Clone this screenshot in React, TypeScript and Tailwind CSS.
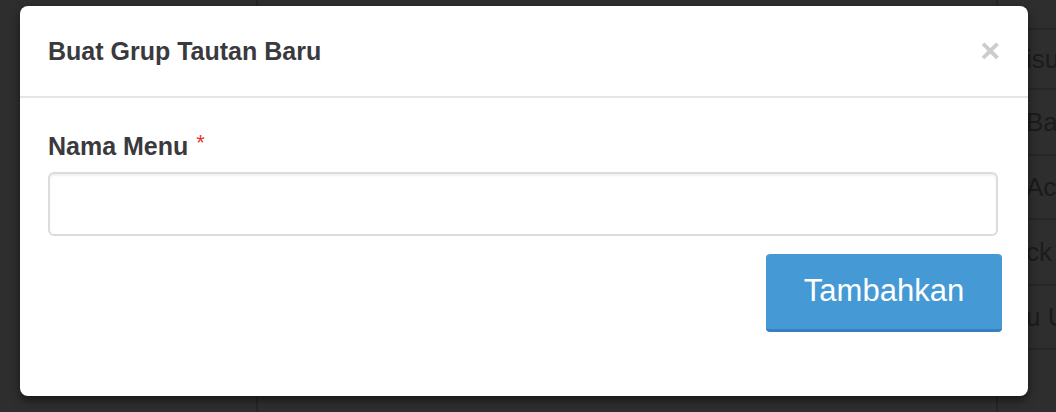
export default function App() {
  const rows = [
    { t: "isu", h: 60 },
    { t: "Bar", h: 66 },
    { t: "Acc", h: 64 },
    { t: "ck", h: 66 },
    { t: "u U", h: 64 },
    { t: "", h: 60 },
  ];

  return (
    <div
      className="relative h-[412px] w-[1056px] overflow-hidden bg-[#2e2e2e]"
      style={{ fontFamily: '"Liberation Sans", Arial, sans-serif' }}
    >
      {/* page behind the overlay */}
      <div className="flex h-full">
        <div className="w-[258px] border-r-2 border-[#262626]" />
        <div className="flex-1" />
        <div className="flex w-[60px] flex-col border-l-2 border-[#262626] pt-[28px]">
          {rows.map((r, i) => (
            <div
              key={i}
              className="flex items-center border-t-2 border-[#262626] pl-[28px] text-[26px] whitespace-nowrap text-[#1b1b1b]"
              style={{ height: r.h }}
            >
              {r.t}
            </div>
          ))}
        </div>
      </div>

      {/* modal */}
      <div className="absolute top-[6px] left-[20px] flex h-[390px] w-[1008px] flex-col rounded-[8px] bg-white shadow-[0_4px_10px_rgba(0,0,0,0.5)]">
        <div className="flex h-[92px] items-center justify-between border-b-2 border-[#e5e5e5] pr-[28px] pl-[28px]">
          <h4 className="text-[25px] leading-none font-bold text-[#3a3a3e]">
            Buat Grup Tautan Baru
          </h4>
          <span className="mt-[-2px] text-[34px] leading-none font-bold text-[#cccccc]">
            ×
          </span>
        </div>

        <div className="flex flex-col pt-[30px] pr-[26px] pl-[28px]">
          <label className="flex items-start text-[25px] leading-[36px] font-bold text-[#3a3a3e]">
            Nama Menu
            <span className="ml-[8px] text-[22px] leading-[30px] font-normal text-[#e03a2f]">*</span>
          </label>
          <div className="mt-[8px] mr-[4px] h-[64px] rounded-[6px] border-2 border-[#dcdcdc] shadow-[inset_0_2px_2px_rgba(0,0,0,0.06)]" />
          <div className="mt-[18px] flex justify-end">
            <button className="h-[78px] w-[236px] rounded-[4px] border-b-[3px] border-[#3580bd] bg-[#4599d5] text-[31px] text-white">
              Tambahkan
            </button>
          </div>
        </div>
      </div>
    </div>
  );
}
